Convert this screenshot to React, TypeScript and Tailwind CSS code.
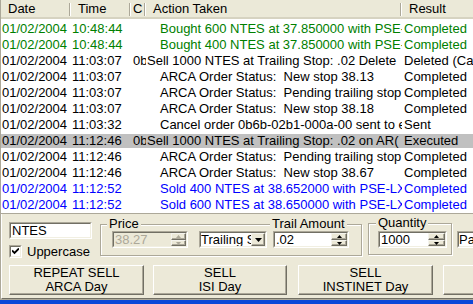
import React from 'react';

type Row = {
  date: string;
  time: string;
  c?: string;
  action: string;
  indent?: boolean;
  result: string;
  color: 'g' | 'b' | 'k';
  sel?: boolean;
};

const rows: Row[] = [
  { date: '01/02/2004', time: '10:48:44', action: 'Bought 600 NTES at 37.850000 with PSE-', indent: true, result: 'Completed', color: 'g' },
  { date: '01/02/2004', time: '10:48:44', action: 'Bought 400 NTES at 37.850000 with PSE-', indent: true, result: 'Completed', color: 'g' },
  { date: '01/02/2004', time: '11:03:07', c: '0b', action: 'Sell 1000 NTES at Trailing Stop: .02 Delete', result: 'Deleted (Ca', color: 'k' },
  { date: '01/02/2004', time: '11:03:07', action: 'ARCA Order Status:  New stop 38.13', indent: true, result: 'Completed', color: 'k' },
  { date: '01/02/2004', time: '11:03:07', action: 'ARCA Order Status:  Pending trailing stop', indent: true, result: 'Completed', color: 'k' },
  { date: '01/02/2004', time: '11:03:07', action: 'ARCA Order Status:  New stop 38.18', indent: true, result: 'Completed', color: 'k' },
  { date: '01/02/2004', time: '11:03:32', action: 'Cancel order 0b6b-02b1-000a-00 sent to e', indent: true, result: 'Sent', color: 'k' },
  { date: '01/02/2004', time: '11:12:46', c: '0b', action: 'Sell 1000 NTES at Trailing Stop: .02 on AR(', result: 'Executed', color: 'k', sel: true },
  { date: '01/02/2004', time: '11:12:46', action: 'ARCA Order Status:  Pending trailing stop', indent: true, result: 'Completed', color: 'k' },
  { date: '01/02/2004', time: '11:12:46', action: 'ARCA Order Status:  New stop 38.67', indent: true, result: 'Completed', color: 'k' },
  { date: '01/02/2004', time: '11:12:52', action: 'Sold 400 NTES at 38.652000 with PSE-LX', indent: true, result: 'Completed', color: 'b' },
  { date: '01/02/2004', time: '11:12:52', action: 'Sold 600 NTES at 38.650000 with PSE-LX', indent: true, result: 'Completed', color: 'b' },
];

function HeaderCell({ w, label, pl }: { w: string; label: string; pl: string }) {
  return (
    <div className={`${w} relative h-full shrink-0 overflow-hidden`}>
      <div className={`${pl} h-[17px] flex items-center whitespace-nowrap`}>{label}</div>
      <div className="absolute right-0 top-[3px] h-[13px] w-[2px] border-l border-l-[#aca899] border-r border-r-white" />
    </div>
  );
}

function Arrow({ dir, color }: { dir: 'up' | 'down'; color: string }) {
  return (
    <svg width="5" height="3" viewBox="0 0 5 3" className="block">
      {dir === 'up' ? <path d="M2.5 0L5 3H0Z" fill={color} /> : <path d="M0 0H5L2.5 3Z" fill={color} />}
    </svg>
  );
}

function Raised({ className, children }: { className: string; children?: React.ReactNode }) {
  return (
    <div className={`border border-t-[#f5f4ee] border-l-[#f5f4ee] border-b-[#716f64] border-r-[#716f64] bg-[#ece9d8] ${className}`}>
      <div className="h-full w-full shadow-[inset_-1px_-1px_0_#aca899] flex items-center justify-center">{children}</div>
    </div>
  );
}

function Spin({ w, disabled }: { w: string; disabled?: boolean }) {
  const col = disabled ? '#aca899' : '#000';
  return (
    <div className={`${w} h-full flex flex-col shrink-0`}>
      <Raised className="h-[7px] w-full">
        <Arrow dir="up" color={col} />
      </Raised>
      <Raised className="h-[6px] w-full">
        <Arrow dir="down" color={col} />
      </Raised>
    </div>
  );
}

function Sunken({ className, children }: { className: string; children?: React.ReactNode }) {
  return (
    <div className={`border border-t-[#aca899] border-l-[#aca899] border-b-white border-r-white shrink-0 ${className}`}>
      <div className="h-full w-full border border-t-[#716f64] border-l-[#716f64] border-b-[#f1efe2] border-r-[#f1efe2] flex items-stretch overflow-hidden">
        {children}
      </div>
    </div>
  );
}

function Group({ className, children, labels }: { className: string; children: React.ReactNode; labels: { text: string; left: string }[] }) {
  return (
    <div className={`relative border border-[#aca899] shadow-[inset_1px_1px_0_#fff,1px_1px_0_#fff] shrink-0 ${className}`}>
      {labels.map((l) => (
        <span key={l.text} className={`absolute -top-[9px] ${l.left} bg-[#ece9d8] px-[2px] leading-[15px] whitespace-nowrap`}>
          {l.text}
        </span>
      ))}
      {children}
    </div>
  );
}

function Combo({ className, text }: { className: string; text: string }) {
  return (
    <Sunken className={className}>
      <div className="flex-1 min-w-0 bg-white leading-[13px] flex items-center whitespace-nowrap overflow-hidden">{text}</div>
      <Raised className="w-[14px] h-full shrink-0">
        <svg width="7" height="4" viewBox="0 0 7 4" className="block">
          <path d="M0 0H7L3.5 4Z" fill="#000" />
        </svg>
      </Raised>
    </Sunken>
  );
}

function Button({ className, l1, l2 }: { className: string; l1: string; l2: string }) {
  return (
    <div className={`border border-t-white border-l-white border-b-[#716f64] border-r-[#716f64] bg-[#ece9d8] h-[30px] shrink-0 ${className}`}>
      <div className="h-full w-full shadow-[inset_-1px_-1px_0_#aca899] flex flex-col items-center justify-center leading-[14px] whitespace-nowrap">
        <span>{l1}</span>
        <span>{l2}</span>
      </div>
    </div>
  );
}

export default function App() {
  return (
    <div className="w-[473px] h-[304px] overflow-hidden bg-[#ece9d8] flex flex-col font-['Liberation_Sans',Arial,sans-serif] text-[13px] text-black">
      {/* List view */}
      <div className="h-[214px] shrink-0 bg-white border-l border-l-[#aca899] border-b border-b-[#aca899] flex flex-col overflow-hidden">
        <div className="h-[19px] shrink-0 flex bg-[#ebe9d8] border-b-2 border-b-[#d6d3c1] w-[600px]">
          <HeaderCell w="w-[70px]" label="Date" pl="pl-[7px]" />
          <HeaderCell w="w-[60px]" label="Time" pl="pl-[7px]" />
          <HeaderCell w="w-[15px]" label="C" pl="pl-[2px]" />
          <HeaderCell w="w-[256px]" label="Action Taken" pl="pl-[7px]" />
          <HeaderCell w="w-[120px]" label="Result" pl="pl-[7px]" />
        </div>
        <div className="pt-[2px] flex flex-col">
          {rows.map((r, i) => {
            const col = r.color === 'g' ? 'text-[#008000]' : r.color === 'b' ? 'text-[#0000ff]' : 'text-black';
            return (
              <div key={i} className="h-[16px] flex items-center">
                <div className={`h-[14px] flex items-center w-[600px] whitespace-pre leading-[14px] ${col} ${r.sel ? 'bg-[#c0c0c0]' : ''}`}>
                  <div className="w-[70px] shrink-0 overflow-hidden pl-[1px]">{r.date}</div>
                  <div className="w-[60px] shrink-0 overflow-hidden pl-[1px]">{r.time}</div>
                  <div className="w-[15px] shrink-0 overflow-hidden pl-[2px]">{r.c ?? ''}</div>
                  <div className={`w-[256px] shrink-0 overflow-hidden ${r.indent ? 'pl-[14px]' : 'pl-[1px]'}`}>{r.action}</div>
                  <div className="w-[120px] shrink-0 overflow-hidden pl-[2px]">{r.result}</div>
                </div>
              </div>
            );
          })}
        </div>
      </div>

      {/* Bottom panel */}
      <div className="flex-1 flex flex-col">
        <div className="h-[86px] shrink-0 border-l border-l-[#aca899] border-b border-b-[#aca899]">
          <div className="h-full border-l border-l-white border-b border-b-[#716f64] pl-[7px] pt-[8px] flex flex-col">
            <div className="flex items-start h-[36px]">
              {/* Symbol + uppercase */}
              <div className="w-[83px] shrink-0 flex flex-col">
                <Sunken className="h-[17px] w-[83px]">
                  <div className="flex-1 bg-white pl-[1px] leading-[13px] flex items-center">NTES</div>
                </Sunken>
                <div className="mt-[6px] h-[13px] flex items-center">
                  <Sunken className="h-[13px] w-[13px]">
                    <div className="flex-1 bg-white flex items-center justify-center">
                      <svg width="7" height="7" viewBox="0 0 7 7" className="block">
                        <path d="M0 2.5L2.5 5L7 0.5" stroke="#000" strokeWidth="1.9" fill="none" />
                      </svg>
                    </div>
                  </Sunken>
                  <span className="ml-[5px] leading-[13px]">Uppercase</span>
                </div>
              </div>

              {/* Price / trail group */}
              <Group
                className="ml-[8px] mt-[2px] w-[262px] h-[32px] pl-[11px] pt-[6px] flex items-start"
                labels={[
                  { text: 'Price', left: 'left-[6px]' },
                  { text: 'Trail Amount', left: 'left-[169px]' },
                ]}
              >
                <Sunken className="h-[17px] w-[76px] bg-[#ece9d8]">
                  <div className="flex-1 pl-[1px] leading-[13px] flex items-center text-[#aca899]">38.27</div>
                  <Spin w="w-[15px]" disabled />
                </Sunken>
                <Combo className="ml-[11px] h-[17px] w-[68px]" text="Trailing Stop" />
                <Sunken className="ml-[6px] h-[17px] w-[76px]">
                  <div className="flex-1 bg-white pl-[1px] leading-[13px] flex items-center">.02</div>
                  <Spin w="w-[16px]" />
                </Sunken>
              </Group>

              {/* Quantity group */}
              <Group
                className="ml-[6px] mt-[1px] w-[84px] h-[32px] pl-[9px] pt-[7px] flex items-start"
                labels={[{ text: 'Quantity', left: 'left-[7px]' }]}
              >
                <Sunken className="h-[17px] w-[69px]">
                  <div className="flex-1 bg-white pl-[1px] leading-[13px] flex items-center">1000</div>
                  <Spin w="w-[17px]" />
                </Sunken>
              </Group>

              <Combo className="ml-[5px] mt-[9px] h-[17px] w-[80px]" text="Partial" />
            </div>

            <div className="mt-[7px] flex">
              <Button className="w-[135px]" l1="REPEAT SELL" l2="ARCA Day" />
              <Button className="ml-[9px] w-[134px]" l1="SELL" l2="ISI Day" />
              <Button className="ml-[11px] w-[135px]" l1="SELL" l2="INSTINET Day" />
              <Button className="ml-[10px] w-[135px]" l1="SELL" l2="ARCA Day" />
            </div>
          </div>
        </div>
        <div className="flex-1 bg-[#0b47d8]" />
      </div>
    </div>
  );
}
